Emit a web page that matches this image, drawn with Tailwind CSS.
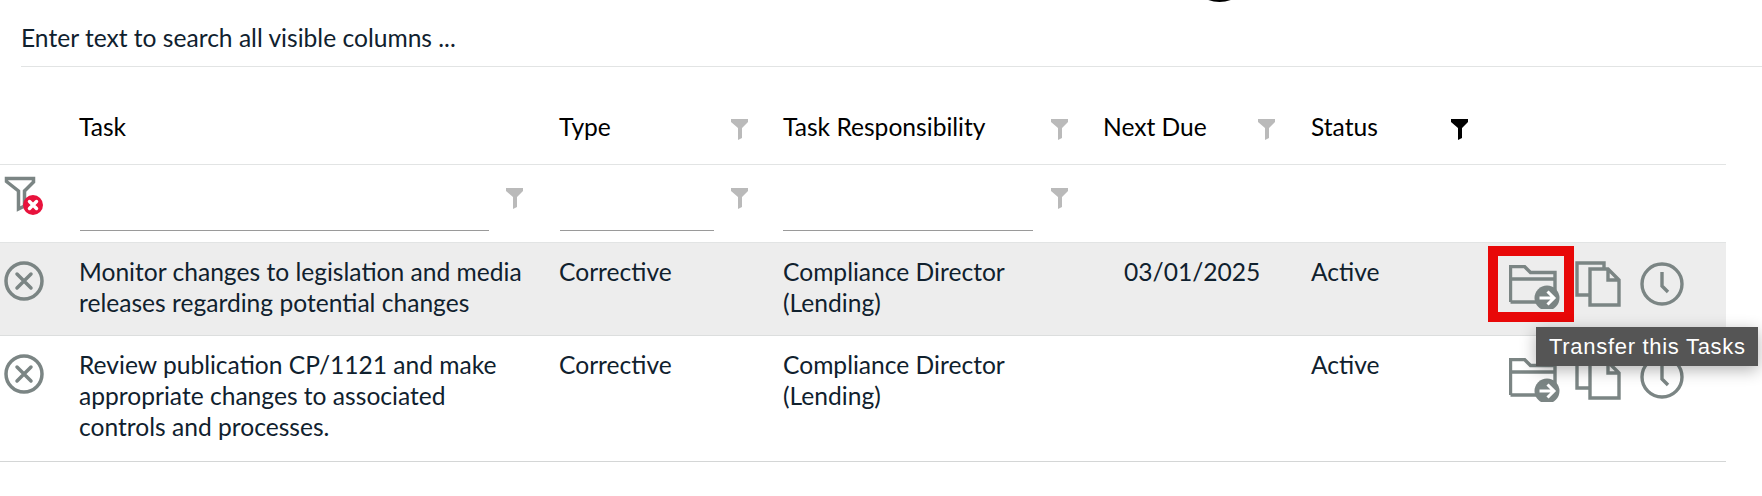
<!DOCTYPE html>
<html>
<head>
<meta charset="utf-8">
<script src="https://cdn.jsdelivr.net/npm/@tailwindcss/browser@4"></script>
</head>
<body class="bg-white">
<div class="relative w-[1762px] h-[496px] overflow-hidden bg-white font-['Lato',sans-serif] text-[24.600px] leading-[31px] text-[#10212e]">
  <div class="absolute left-[1187px] top-[-63px] w-[65px] h-[65px] rounded-full bg-black"></div>

  <div class="ml-[21px] h-[67px] pt-[22px] border-b border-[#e2e4e4]">Enter text to search all visible columns ...</div>

  <div class="w-[1726px] grid grid-cols-[79px_480px_224px_320px_208px_177px_238px]">
    <!-- header -->
    <div class="h-[98px] border-b border-[#e2e4e4]"></div>
    <div class="h-[98px] border-b border-[#e2e4e4] pt-[44px] text-black">Task</div>
    <div class="h-[98px] border-b border-[#e2e4e4] pt-[44px] text-black relative">Type
      <svg class="absolute left-[172px] top-[52px] w-[17px] h-[21px]" viewBox="0 0 17 21"><path d="M0 0h17v3l-6 6v10l-4 2V9L0 3z" fill="#bababa"/></svg>
    </div>
    <div class="h-[98px] border-b border-[#e2e4e4] pt-[44px] text-black relative">Task Responsibility
      <svg class="absolute left-[268px] top-[52px] w-[17px] h-[21px]" viewBox="0 0 17 21"><path d="M0 0h17v3l-6 6v10l-4 2V9L0 3z" fill="#bababa"/></svg>
    </div>
    <div class="h-[98px] border-b border-[#e2e4e4] pt-[44px] text-black relative">Next Due
      <svg class="absolute left-[155px] top-[52px] w-[17px] h-[21px]" viewBox="0 0 17 21"><path d="M0 0h17v3l-6 6v10l-4 2V9L0 3z" fill="#bababa"/></svg>
    </div>
    <div class="h-[98px] border-b border-[#e2e4e4] pt-[44px] text-black relative">Status
      <svg class="absolute left-[140px] top-[52px] w-[17px] h-[21px]" viewBox="0 0 17 21"><path d="M0 0h17v3l-6 6v10l-4 2V9L0 3z" fill="#000"/></svg>
    </div>
    <div class="h-[98px] border-b border-[#e2e4e4]"></div>

    <!-- filter row -->
    <div class="h-[78px] border-b border-[#e2e4e4] relative">
      <svg class="absolute left-[4px] top-[11px] w-[42px] h-[42px]" viewBox="0 0 42 42">
        <path d="M2.500 2.500h27v3.500l-9 9v15l-6 3v-18l-12-9.500z" fill="none" stroke="#7b8584" stroke-width="3.500"/>
        <circle cx="29" cy="29" r="10" fill="#e8123c"/>
        <path d="M25.500 25.500l7 7M32.500 25.500l-7 7" stroke="#fff" stroke-width="3.500" stroke-linecap="round"/>
      </svg>
    </div>
    <div class="h-[78px] border-b border-[#e2e4e4] relative">
      <div class="absolute left-[1px] top-[65px] w-[409px] border-b border-[#9a9a9a]"></div>
      <svg class="absolute left-[427px] top-[23px] w-[17px] h-[21px]" viewBox="0 0 17 21"><path d="M0 0h17v3l-6 6v10l-4 2V9L0 3z" fill="#bababa"/></svg>
    </div>
    <div class="h-[78px] border-b border-[#e2e4e4] relative">
      <div class="absolute left-[1px] top-[65px] w-[154px] border-b border-[#9a9a9a]"></div>
      <svg class="absolute left-[172px] top-[23px] w-[17px] h-[21px]" viewBox="0 0 17 21"><path d="M0 0h17v3l-6 6v10l-4 2V9L0 3z" fill="#bababa"/></svg>
    </div>
    <div class="h-[78px] border-b border-[#e2e4e4] relative">
      <div class="absolute left-[0px] top-[65px] w-[250px] border-b border-[#9a9a9a]"></div>
      <svg class="absolute left-[268px] top-[23px] w-[17px] h-[21px]" viewBox="0 0 17 21"><path d="M0 0h17v3l-6 6v10l-4 2V9L0 3z" fill="#bababa"/></svg>
    </div>
    <div class="h-[78px] border-b border-[#e2e4e4]"></div>
    <div class="h-[78px] border-b border-[#e2e4e4]"></div>
    <div class="h-[78px] border-b border-[#e2e4e4]"></div>

    <!-- row 1 -->
    <div class="h-[93px] bg-[#ededed] border-b border-[#dcdede] pt-[18px] pl-[4px]">
      <svg class="w-[40px] h-[40px] block" viewBox="0 0 40 40"><circle cx="20" cy="20" r="18" fill="none" stroke="#7b8584" stroke-width="3.500"/><path d="M13 13l14 14M27 13L13 27" stroke="#7b8584" stroke-width="3.500" stroke-linecap="round"/></svg>
    </div>
    <div class="h-[93px] bg-[#ededed] border-b border-[#dcdede] pt-[13px] pr-[24px]">Monitor changes to legislation and media releases regarding potential changes</div>
    <div class="h-[93px] bg-[#ededed] border-b border-[#dcdede] pt-[13px]">Corrective</div>
    <div class="h-[93px] bg-[#ededed] border-b border-[#dcdede] pt-[13px]">Compliance Director<br>(Lending)</div>
    <div class="h-[93px] bg-[#ededed] border-b border-[#dcdede] pt-[13px] pl-[21px]">03/01/2025</div>
    <div class="h-[93px] bg-[#ededed] border-b border-[#dcdede] pt-[13px]">Active</div>
    <div class="h-[93px] bg-[#ededed] border-b border-[#dcdede] pt-[3px] flex items-start relative">
      <div class="w-[86px] h-[76px] border-[10px] border-[#e80808] pl-[11px] pt-[9px] shrink-0">
        <svg class="w-[54px] h-[44px] block" viewBox="0 0 54 44"><path d="M1.500 37V1.500h14l6 6h24.500v22M1.500 14h44.500M1.500 37h36" fill="none" stroke="#7b8584" stroke-width="3.400"/><circle cx="38" cy="33" r="12.500" fill="#7b8584"/><path d="M30.500 33h14M38.500 26.500l6.500 6.500-6.500 6.500" fill="none" stroke="#fff" stroke-width="3"/></svg>
      </div>
      <svg class="w-[46px] h-[46px] ml-[1px] mt-[15px] shrink-0" viewBox="0 0 46 46"><path d="M15 34H2V2h27v6M15 8h18l11 11v25H15zM33 8v11h11" fill="none" stroke="#7b8584" stroke-width="3.400"/></svg>
      <svg class="w-[44px] h-[44px] ml-[19px] mt-[16px] shrink-0" viewBox="0 0 44 44"><circle cx="22" cy="22" r="20" fill="none" stroke="#7b8584" stroke-width="3.400"/><path d="M22 10v14l6 6" fill="none" stroke="#7b8584" stroke-width="3.400"/></svg>
      <div class="absolute left-[48px] top-[84px] w-[222px] h-[39px] z-10 bg-[#555555] text-white font-['Liberation_Sans',sans-serif] text-[22px] leading-[39px] pl-[13px] tracking-[0.7px] whitespace-nowrap shadow-[0_4px_16px_rgba(0,0,0,0.3)]">Transfer this Tasks</div>
    </div>

    <!-- row 2 -->
    <div class="h-[126px] border-b border-[#d4d6d6] pt-[18px] pl-[4px]">
      <svg class="w-[40px] h-[40px] block" viewBox="0 0 40 40"><circle cx="20" cy="20" r="18" fill="none" stroke="#7b8584" stroke-width="3.500"/><path d="M13 13l14 14M27 13L13 27" stroke="#7b8584" stroke-width="3.500" stroke-linecap="round"/></svg>
    </div>
    <div class="h-[126px] border-b border-[#d4d6d6] pt-[13px] pr-[24px]">Review publication CP/1121 and make appropriate changes to associated controls and processes.</div>
    <div class="h-[126px] border-b border-[#d4d6d6] pt-[13px]">Corrective</div>
    <div class="h-[126px] border-b border-[#d4d6d6] pt-[13px]">Compliance Director<br>(Lending)</div>
    <div class="h-[126px] border-b border-[#d4d6d6]"></div>
    <div class="h-[126px] border-b border-[#d4d6d6] pt-[13px]">Active</div>
    <div class="h-[126px] border-b border-[#d4d6d6] pt-[3px] flex items-start">
      <div class="w-[86px] h-[76px] border-[10px] border-transparent pl-[11px] pt-[9px] shrink-0">
        <svg class="w-[54px] h-[44px] block" viewBox="0 0 54 44"><path d="M1.500 37V1.500h14l6 6h24.500v22M1.500 14h44.500M1.500 37h36" fill="none" stroke="#7b8584" stroke-width="3.400"/><circle cx="38" cy="33" r="12.500" fill="#7b8584"/><path d="M30.500 33h14M38.500 26.500l6.500 6.500-6.500 6.500" fill="none" stroke="#fff" stroke-width="3"/></svg>
      </div>
      <svg class="w-[46px] h-[46px] ml-[1px] mt-[15px] shrink-0" viewBox="0 0 46 46"><path d="M15 34H2V2h27v6M15 8h18l11 11v25H15zM33 8v11h11" fill="none" stroke="#7b8584" stroke-width="3.400"/></svg>
      <svg class="w-[44px] h-[44px] ml-[19px] mt-[16px] shrink-0" viewBox="0 0 44 44"><circle cx="22" cy="22" r="20" fill="none" stroke="#7b8584" stroke-width="3.400"/><path d="M22 10v14l6 6" fill="none" stroke="#7b8584" stroke-width="3.400"/></svg>
    </div>
  </div>
</div>
</body>
</html>
